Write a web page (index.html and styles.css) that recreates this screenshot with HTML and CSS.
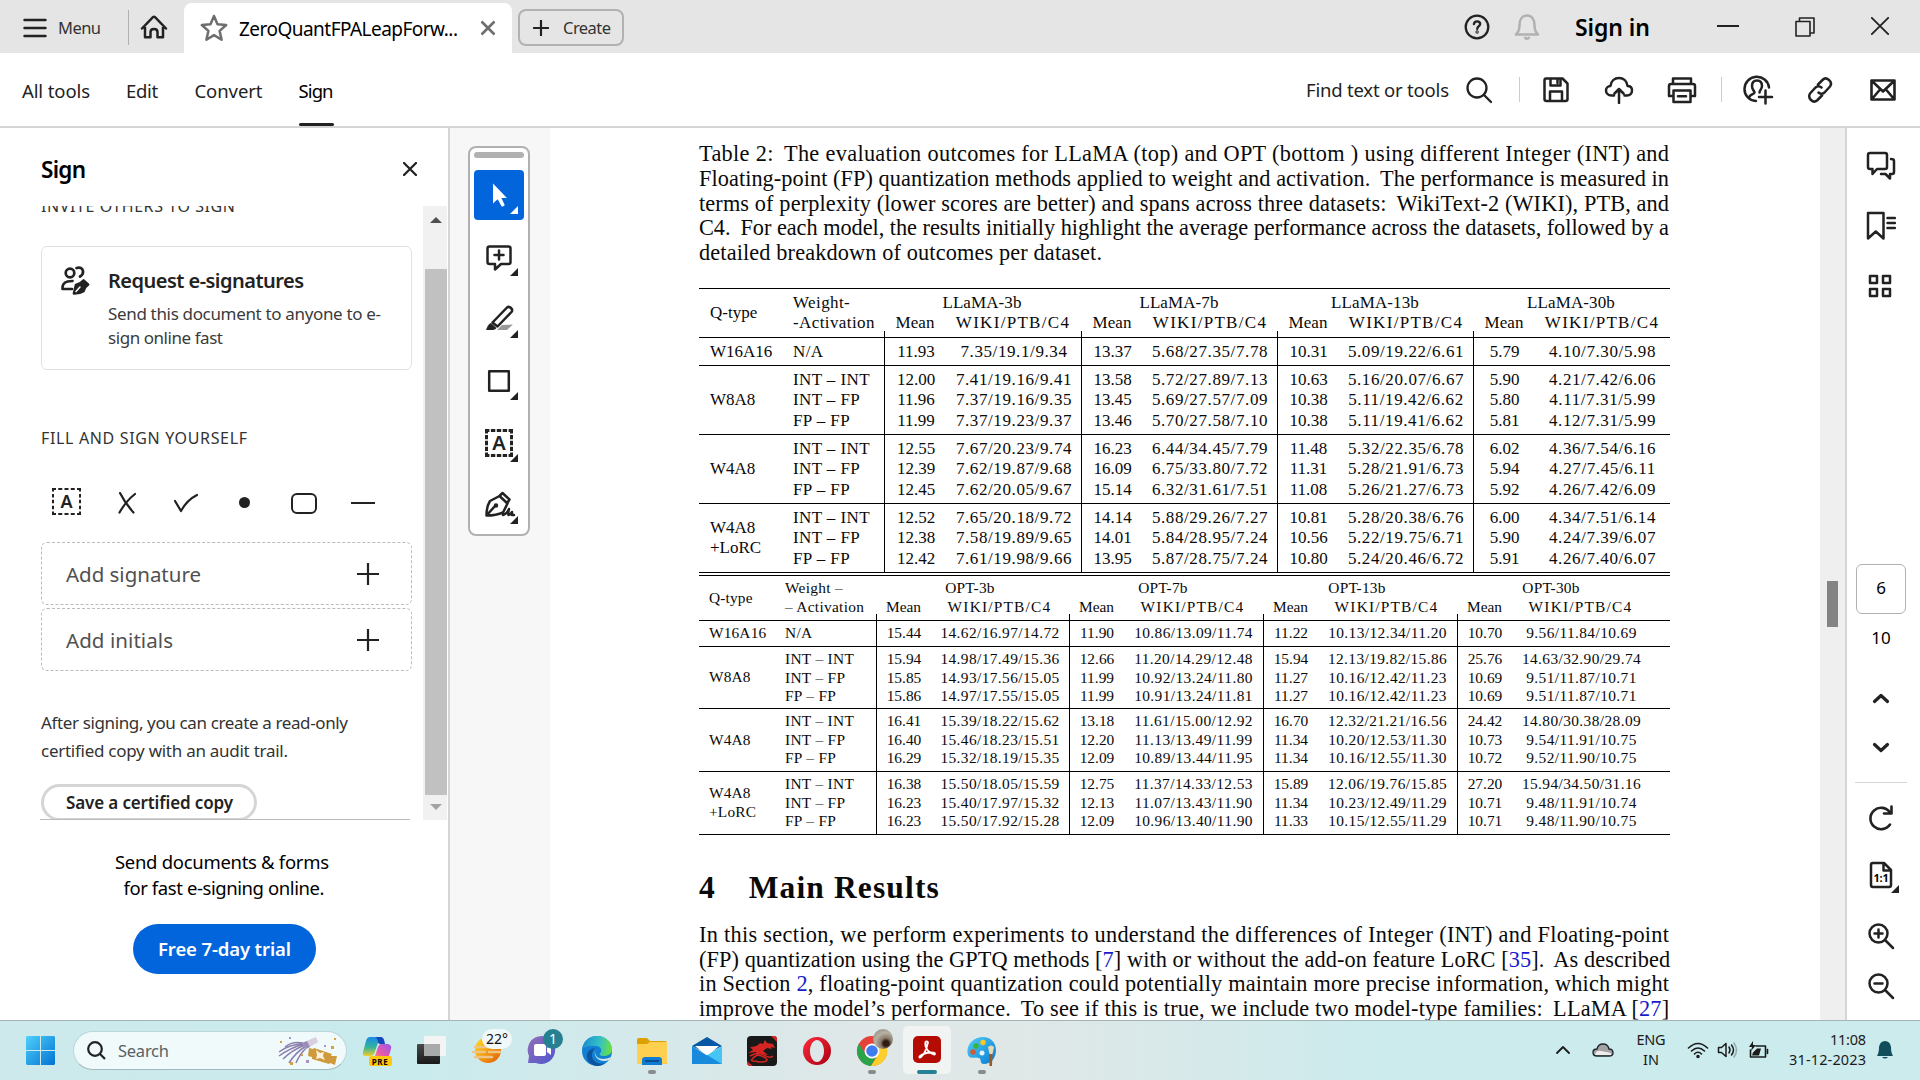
FILE: index.html
```html
<!DOCTYPE html>
<html lang="en">
<head>
<meta charset="utf-8">
<title>ZeroQuantFPALeapForward.pdf</title>
<link rel="stylesheet" href="styles.css">
</head>
<body>
<div class="window">
  <header class="titlebar">
    <div class="menu">
      <svg class="ic" width="24" height="20" viewBox="0 0 24 20" stroke-width="2.4"><path d="M1.5 2h21M1.5 10h21M1.5 18h21"/></svg>
      <span data-w="43">Menu</span>
    </div>
    <div class="home">
      <svg class="ic" width="28" height="26" viewBox="0 0 28 26" stroke-width="2.5"><path d="M2 14.500 13 3.200q1-1 2 0L26 14.500M5 13v10.200h5.500V18q0-3 3.500-3t3.500 3v5.200H23V13"/></svg>
    </div>
    <div class="tab">
      <svg class="star" width="30" height="30" viewBox="0 0 30 30"><path d="m15 3 3.500 8.200 8.700.8-6.600 5.900 2 8.800L15 22.100 7.400 26.700l2-8.800L2.800 12l8.700-.8z"/></svg>
      <span class="tab-title" data-w="219">ZeroQuantFPALeapForw...</span>
      <svg class="tab-close" width="16" height="16" viewBox="0 0 16 16"><path d="m1.500 1.500 13 13m0-13-13 13"/></svg>
    </div>
    <div class="create">
      <svg class="ic" width="16" height="16" viewBox="0 0 16 16" stroke-width="2.2"><path d="M8 .8v14.400M.8 8h14.400"/></svg>
      <span data-w="48">Create</span>
    </div>
    <div class="title-right">
      <svg class="ic" width="26" height="26" viewBox="0 0 26 26" stroke-width="2.300"><circle cx="13" cy="13" r="11.300"/><path d="M9.900 10.200q.3-2.900 3.200-2.900t3.100 2.600c0 2-3 2.500-3 5"/><circle cx="13.100" cy="18" r=".5"/></svg>
      <svg class="bell" width="26" height="28" viewBox="0 0 26 28"><path d="M2 21.500h22c-2.500-2.500-3.500-4-3.500-9C20.500 6 17.500 2.500 13 2.500S5.500 6 5.500 12.500c0 5-1 6.500-3.500 9zM10.500 24q2.500 3.500 5 0"/></svg>
      <span class="signin" data-w="75">Sign in</span>
      <svg class="ic min" width="22" height="20" viewBox="0 0 22 20" stroke-width="1.800"><path d="M0 9h22"/></svg>
      <svg class="ic restore" width="20" height="20" viewBox="0 0 20 20" stroke-width="1.600"><path d="M1 4.500h14V19H1zM4.500 4V1H19v15h-4"/></svg>
      <svg class="ic close" width="18" height="18" viewBox="0 0 18 18" stroke-width="1.800"><path d="m.8.800 16.400 16.400m0-16.400L.8 17.200"/></svg>
    </div>
  </header>

  <nav class="toolbar">
    <span class="t1" data-w="68">All tools</span>
    <span class="t2" data-w="32">Edit</span>
    <span class="t3" data-w="68">Convert</span>
    <span class="t4 active" data-w="35">Sign</span>
    <div class="tool-right">
      <span data-w="143">Find text or tools</span>
      <svg class="ic find" width="28" height="28" viewBox="0 0 28 28" stroke-width="2.300"><circle cx="12" cy="12" r="9.500"/><path d="m19 19 7 7"/></svg>
      <i class="sep"></i>
      <svg class="ic i1" width="28" height="28" viewBox="0 0 28 28" stroke-width="2.500"><path d="M4 2.500h16.500l5 5V23q0 2-2 2h-19q-2 0-2-2V4.500q0-2 1.500-2zM8.500 3v6.500h10V3M8 25v-9.500h12V25M15.500 4v3"/></svg>
      <svg class="ic i2" width="30" height="28" viewBox="0 0 30 28" stroke-width="2.500"><path d="M10 19.500H7.500C4 19.500 2 17 2 14.500s2-4.500 4.500-4.500C7 5 10.500 2 15 2s8 3 8.500 8c3 0 4.500 2 4.500 4.500 0 3-2 5-5 5h-2.500M15 27V13M10.500 17.500 15 13l4.500 4.500"/></svg>
      <svg class="ic i3" width="30" height="28" viewBox="0 0 30 28" stroke-width="2.500"><path d="M6 20H2V10q0-2 2-2h22q2 0 2 2v10h-4M6 8V2.500h18V8M6.500 14.500h17V26h-17zM11 20.300h8"/></svg>
      <i class="sep"></i>
      <svg class="ic i4" width="32" height="32" viewBox="0 0 32 32" stroke-width="2.500"><path d="M14 27C7 26.500 2.500 21.500 2.500 15A12.300 12.300 0 0 1 27 13.500M7 24c.5-4 5.500-3.500 5.500-5.500 0-1.500-2.500-2.500-2.500-6.500 0-3.500 2-5.500 5-5.500s5 2 5 5.500c0 3-2.500 4.500-2.500 6.500M23.500 16.500v13M17 23h13"/></svg>
      <svg class="ic i5" width="28" height="28" viewBox="0 0 28 28" stroke-width="2.500"><path d="m12 8.500 5-5q2.500-2.500 6 .5t1 6.500l-5.500 6q-3 2.500-6 0M16 19.500l-5 5q-3 2.500-6-.5t-1-6.500l5.500-6q3-2.500 6 0"/></svg>
      <svg class="ic i6" width="28" height="24" viewBox="0 0 28 24" stroke-width="2.600"><path d="M2.500 2.500h23v19h-23zM3 3l11 10.500L25 3M3 21l8-9.500M25 21l-8-9.500"/></svg>
    </div>
  </nav>

  <main class="body">
    <aside class="panel">
      <div class="panel-head">
        <span data-w="45">Sign</span>
        <svg class="ic" width="14" height="14" viewBox="0 0 14 14" stroke-width="2.300"><path d="m1 1 12 12M13 1 1 13"/></svg>
      </div>
      <div class="scroller">
        <div class="scroll-content">
          <h3 class="invite"><span data-w="194">INVITE OTHERS TO SIGN</span></h3>
          <section class="card">
            <svg class="ic" width="30" height="30" viewBox="0 0 30 30" stroke-width="2.700"><circle cx="10" cy="8" r="4.300"/><path d="M16.500 3q5.500-1.500 6.500 3 .5 3.500-3 5.500M12 24H2.500q-.5-6 5-7.500l5-.5"/><path fill="#222" d="M14 28.500l2-8.500q5-1.500 7.500-4.500l4.500 4q-4 2.500-4.500 6.500-4 2.500-9.500 2.500z"/><path d="m16 26.500 4-4.500" stroke="#fff" stroke-width="1.500"/></svg>
            <div>
              <h2><span data-w="196">Request e-signatures</span></h2>
              <p><span data-w="273">Send this document to anyone to e-</span><br><span data-w="115">sign online fast</span></p>
            </div>
          </section>
          <h3 class="fill"><span data-w="206">FILL AND SIGN YOURSELF</span></h3>
          <div class="marks">
            <span class="textbox-mark small"><svg class="frame" width="29" height="27" viewBox="0 0 29 27"><path stroke-dasharray="4 2.250" d="M0 1h29M0 26h29"/><path stroke-dasharray="3.500 2.375" d="M1 0v27M28 0v27"/></svg><b>A</b></span>
            <svg class="ic cross" width="18" height="22" viewBox="0 0 18 22" stroke-width="2.200"><path d="M2 1q5 10 13.500 19.500M17 2Q8 9 1.500 20.500"/></svg>
            <svg class="ic check" width="24" height="20" viewBox="0 0 24 20" stroke-width="2.200"><path d="m1 8 6 10Q13 7 23 2"/></svg>
            <i class="dot"></i>
            <i class="rounded"></i>
            <i class="dash"></i>
          </div>
          <div class="adder"><span data-w="135">Add signature</span><svg class="ic" width="22" height="22" viewBox="0 0 22 22" stroke-width="2.200"><path d="M11 0v22M0 11h22"/></svg></div>
          <div class="adder"><span data-w="107">Add initials</span><svg class="ic" width="22" height="22" viewBox="0 0 22 22" stroke-width="2.200"><path d="M11 0v22M0 11h22"/></svg></div>
          <p class="after"><span data-w="307">After signing, you can create a read-only</span><br><span data-w="247">certified copy with an audit trail.</span></p>
          <div class="save"><span data-w="167">Save a certified copy</span></div>
        </div>
        <div class="scrollbar"><i class="up"></i><i class="thumb"></i><i class="down"></i></div>
      </div>
      <div class="promo">
        <p><span class="lead" data-w="214">Send documents &amp; forms</span><br><span data-w="201">for fast e-signing online.</span></p>
        <div class="trial"><span data-w="133">Free 7-day trial</span></div>
      </div>
    </aside>

    <div class="gutter">
      <div class="palette">
        <i class="grip"></i>
        <div class="tool selected"><svg width="50" height="50" viewBox="0 0 50 50"><path fill="#fff" d="M19 13.500v20l4.700-4.200 3.800 7q2.500.7 3.200-1.300l-3.300-7h5.500z"/></svg></div>
        <div class="tool"><svg class="ic" width="50" height="50" viewBox="0 0 50 50" stroke-width="2.500"><path d="M15.500 14.500h19q2 0 2 2V30q0 2-2 2H27l-6 5.500V32h-5.500q-2 0-2-2V16.500q0-2 2-2zM25 18.500v9M20.500 23h9"/></svg></div>
        <div class="tool"><svg class="ic" width="50" height="50" viewBox="0 0 50 50" stroke-width="2.500"><path d="m18.500 28.500 14.500-15q2-1.500 4 .5t.5 4L23.500 32.500z"/><path fill="#222" stroke="none" d="m17 29 5.500 5q-1 2-4 2H12q2-6 5-7z"/><path fill="#999" stroke="none" d="m28 31 11-.5-6 5.500H23z"/></svg></div>
        <div class="tool"><svg class="ic" width="50" height="50" viewBox="0 0 50 50" stroke-width="2.500"><path d="M15.200 15.200h19.600v19.600H15.200z"/></svg></div>
        <div class="tool"><span class="textbox-mark"><svg class="frame bold" width="28" height="28" viewBox="0 0 28 28"><path stroke-dasharray="4.400 1.500" d="M0 1.500h28M0 26.500h28"/><path stroke-dasharray="4.400 1.500" d="M1.500 0v28M26.500 0v28"/></svg><b>A</b></span></div>
        <div class="tool"><svg class="ic" width="50" height="50" viewBox="0 0 50 50" stroke-width="2.500"><path d="M12.500 35.500q0-9 3.500-14.500l9.500-5 8 7.500-4.500 9q-6.500 3-16.500 3l8.500-9.500M25.500 16l3-3 7 6.500-2.500 4M29 35q4-1 6-6-1 4-.5 6 2.500-.5 3.500-3v3h2"/><circle cx="22" cy="25.500" r="1"/></svg></div>
      </div>
    </div>

    <article class="page">
      <div class="text caption">
        <span data-w="970">Table 2:&thinsp; The evaluation outcomes for LLaMA (top) and OPT (bottom ) using different Integer (INT) and</span>
        <span data-w="970">Floating-point (FP) quantization methods applied to weight and activation.&thinsp; The performance is measured in</span>
        <span data-w="970">terms of perplexity (lower scores are better) and spans across three datasets:&thinsp; WikiText-2 (WIKI), PTB, and</span>
        <span data-w="970">C4.&thinsp; For each model, the results initially highlight the average performance across the datasets, followed by a</span>
        <span data-w="403">detailed breakdown of outcomes per dataset.</span>
      </div>

      <div class="results llama">
        <div class="row head"><div class="q">Q-type</div><div class="wa">Weight-<br>-Activation</div>
          <div class="model"><span>LLaMA-3b</span><i>Mean</i><b>WIKI/PTB/C4</b></div><div class="model"><span>LLaMA-7b</span><i>Mean</i><b>WIKI/PTB/C4</b></div><div class="model"><span>LLaMA-13b</span><i>Mean</i><b>WIKI/PTB/C4</b></div><div class="model"><span>LLaMA-30b</span><i>Mean</i><b>WIKI/PTB/C4</b></div></div>
        <div class="row one"><div class="q">W16A16</div><div class="wa">N/A</div>
          <div class="mean">11.93</div><div class="ppl">7.35/19.1/9.34</div><div class="mean">13.37</div><div class="ppl">5.68/27.35/7.78</div><div class="mean">10.31</div><div class="ppl">5.09/19.22/6.61</div><div class="mean">5.79</div><div class="ppl">4.10/7.30/5.98</div></div>
        <div class="row"><div class="q">W8A8</div><div class="wa">INT – INT<br>INT – FP<br>FP – FP</div>
          <div class="mean">12.00<br>11.96<br>11.99</div><div class="ppl">7.41/19.16/9.41<br>7.37/19.16/9.35<br>7.37/19.23/9.37</div>
          <div class="mean">13.58<br>13.45<br>13.46</div><div class="ppl">5.72/27.89/7.13<br>5.69/27.57/7.09<br>5.70/27.58/7.10</div>
          <div class="mean">10.63<br>10.38<br>10.38</div><div class="ppl">5.16/20.07/6.67<br>5.11/19.42/6.62<br>5.11/19.41/6.62</div>
          <div class="mean">5.90<br>5.80<br>5.81</div><div class="ppl">4.21/7.42/6.06<br>4.11/7.31/5.99<br>4.12/7.31/5.99</div></div>
        <div class="row"><div class="q">W4A8</div><div class="wa">INT – INT<br>INT – FP<br>FP – FP</div>
          <div class="mean">12.55<br>12.39<br>12.45</div><div class="ppl">7.67/20.23/9.74<br>7.62/19.87/9.68<br>7.62/20.05/9.67</div>
          <div class="mean">16.23<br>16.09<br>15.14</div><div class="ppl">6.44/34.45/7.79<br>6.75/33.80/7.72<br>6.32/31.61/7.51</div>
          <div class="mean">11.48<br>11.31<br>11.08</div><div class="ppl">5.32/22.35/6.78<br>5.28/21.91/6.73<br>5.26/21.27/6.73</div>
          <div class="mean">6.02<br>5.94<br>5.92</div><div class="ppl">4.36/7.54/6.16<br>4.27/7.45/6.11<br>4.26/7.42/6.09</div></div>
        <div class="row"><div class="q">W4A8<br>+LoRC</div><div class="wa">INT – INT<br>INT – FP<br>FP – FP</div>
          <div class="mean">12.52<br>12.38<br>12.42</div><div class="ppl">7.65/20.18/9.72<br>7.58/19.89/9.65<br>7.61/19.98/9.66</div>
          <div class="mean">14.14<br>14.01<br>13.95</div><div class="ppl">5.88/29.26/7.27<br>5.84/28.95/7.24<br>5.87/28.75/7.24</div>
          <div class="mean">10.81<br>10.56<br>10.80</div><div class="ppl">5.28/20.38/6.76<br>5.22/19.75/6.71<br>5.24/20.46/6.72</div>
          <div class="mean">6.00<br>5.90<br>5.91</div><div class="ppl">4.34/7.51/6.14<br>4.24/7.39/6.07<br>4.26/7.40/6.07</div></div>
      </div>

      <div class="results opt">
        <div class="row head"><div class="q">Q-type</div><div class="wa">Weight –<br>– Activation</div>
          <div class="model"><span>OPT-3b</span><i>Mean</i><b>WIKI/PTB/C4</b></div><div class="model"><span>OPT-7b</span><i>Mean</i><b>WIKI/PTB/C4</b></div><div class="model"><span>OPT-13b</span><i>Mean</i><b>WIKI/PTB/C4</b></div><div class="model"><span>OPT-30b</span><i>Mean</i><b>WIKI/PTB/C4</b></div></div>
        <div class="row one"><div class="q">W16A16</div><div class="wa">N/A</div>
          <div class="mean">15.44</div><div class="ppl">14.62/16.97/14.72</div><div class="mean">11.90</div><div class="ppl">10.86/13.09/11.74</div><div class="mean">11.22</div><div class="ppl">10.13/12.34/11.20</div><div class="mean">10.70</div><div class="ppl">9.56/11.84/10.69</div></div>
        <div class="row first"><div class="q">W8A8</div><div class="wa">INT – INT<br>INT – FP<br>FP – FP</div>
          <div class="mean">15.94<br>15.85<br>15.86</div><div class="ppl">14.98/17.49/15.36<br>14.93/17.56/15.05<br>14.97/17.55/15.05</div>
          <div class="mean">12.66<br>11.99<br>11.99</div><div class="ppl">11.20/14.29/12.48<br>10.92/13.24/11.80<br>10.91/13.24/11.81</div>
          <div class="mean">15.94<br>11.27<br>11.27</div><div class="ppl">12.13/19.82/15.86<br>10.16/12.42/11.23<br>10.16/12.42/11.23</div>
          <div class="mean">25.76<br>10.69<br>10.69</div><div class="ppl">14.63/32.90/29.74<br>9.51/11.87/10.71<br>9.51/11.87/10.71</div></div>
        <div class="row"><div class="q">W4A8</div><div class="wa">INT – INT<br>INT – FP<br>FP – FP</div>
          <div class="mean">16.41<br>16.40<br>16.29</div><div class="ppl">15.39/18.22/15.62<br>15.46/18.23/15.51<br>15.32/18.19/15.35</div>
          <div class="mean">13.18<br>12.20<br>12.09</div><div class="ppl">11.61/15.00/12.92<br>11.13/13.49/11.99<br>10.89/13.44/11.95</div>
          <div class="mean">16.70<br>11.34<br>11.34</div><div class="ppl">12.32/21.21/16.56<br>10.20/12.53/11.30<br>10.16/12.55/11.30</div>
          <div class="mean">24.42<br>10.73<br>10.72</div><div class="ppl">14.80/30.38/28.09<br>9.54/11.91/10.75<br>9.52/11.90/10.75</div></div>
        <div class="row"><div class="q">W4A8<br>+LoRC</div><div class="wa">INT – INT<br>INT – FP<br>FP – FP</div>
          <div class="mean">16.38<br>16.23<br>16.23</div><div class="ppl">15.50/18.05/15.59<br>15.40/17.97/15.32<br>15.50/17.92/15.28</div>
          <div class="mean">12.75<br>12.13<br>12.09</div><div class="ppl">11.37/14.33/12.53<br>11.07/13.43/11.90<br>10.96/13.40/11.90</div>
          <div class="mean">15.89<br>11.34<br>11.33</div><div class="ppl">12.06/19.76/15.85<br>10.23/12.49/11.29<br>10.15/12.55/11.29</div>
          <div class="mean">27.20<br>10.71<br>10.71</div><div class="ppl">15.94/34.50/31.16<br>9.48/11.91/10.74<br>9.48/11.90/10.75</div></div>
      </div>

      <h1 class="section"><span>4</span><span data-w="190">Main Results</span></h1>
      <div class="text">
        <span data-w="970">In this section, we perform experiments to understand the differences of Integer (INT) and Floating-point</span>
        <span data-w="971">(FP) quantization using the GPTQ methods [<a>7</a>] with or without the add-on feature LoRC [<a>35</a>].&thinsp; As described</span>
        <span data-w="970">in Section <a>2</a>, floating-point quantization could potentially maintain more precise information, which might</span>
        <span data-w="970">improve the model’s performance.&thinsp; To see if this is true, we include two model-type families:&thinsp; LLaMA [<a>27</a>]</span>
      </div>
    </article>

    <div class="doc-scroll"><i></i></div>

    <aside class="rail">
      <svg class="ic r1" width="30" height="30" viewBox="0 0 30 30" stroke-width="2.500"><path d="M4 3h15q2 0 2 2v12q0 2-2 2h-8l-4.500 5v-5H4q-2 0-2-2V5q0-2 2-2zM25 9q3 0 3 2v11q0 2-2 2h-2v4.500L19.500 24H15"/></svg>
      <svg class="ic r2" width="30" height="30" viewBox="0 0 30 30" stroke-width="2.500"><path d="M2 2h15.500v25.500l-7.700-7-7.800 7zM21.500 7H29M21.500 12H29M21.500 17H29"/></svg>
      <svg class="ic r3" width="24" height="24" viewBox="0 0 24 24" stroke-width="2.500"><path d="M2 2h7v7H2zM15 2h7v7h-7zM2 15h7v7H2zM15 15h7v7h-7z"/></svg>
      <div class="pagebox">6</div>
      <div class="pagecount">10</div>
      <svg class="ic r4" width="18" height="12" viewBox="0 0 18 12" stroke-width="3.200"><path d="m2.500 9.500 6.500-6 6.500 6"/></svg>
      <svg class="ic r5" width="18" height="12" viewBox="0 0 18 12" stroke-width="3.200"><path d="m2.500 2.500 6.500 6 6.500-6"/></svg>
      <i class="rule"></i>
      <svg class="ic r6" width="28" height="28" viewBox="0 0 28 28" stroke-width="2.600"><path d="M23 20.500A10.700 10.700 0 1 1 23 8.500M24.500 2.500V9.500H17"/></svg>
      <div class="fit"><svg class="ic" width="24" height="28" viewBox="0 0 24 28" stroke-width="2.500"><path d="M4 2h11l7 7v15q0 2-2 2H4q-2 0-2-2V4q0-2 2-2zM14.500 2v7.500H22"/></svg><span>1:1</span></div>
      <svg class="ic r7" width="28" height="28" viewBox="0 0 28 28" stroke-width="2.500"><circle cx="11.500" cy="11.500" r="9"/><path d="m18 18 8 8M11.500 7.500v8M7.500 11.500h8"/></svg>
      <svg class="ic r8" width="28" height="28" viewBox="0 0 28 28" stroke-width="2.500"><circle cx="11.500" cy="11.500" r="9"/><path d="m18 18 8 8M7.500 11.500h8"/></svg>
    </aside>
  </main>

  <footer class="taskbar">
    <svg class="start" width="29" height="29" viewBox="0 0 29 29"><defs><linearGradient id="win" x1="0" y1="0" x2="1" y2="1"><stop offset="0" stop-color="#4fd0fb"/><stop offset="1" stop-color="#0173d2"/></linearGradient></defs><path fill="url(#win)" d="M1 0h13v14H0V1zM15 0h13l1 1v13H15zM0 15h14v14H1l-1-1zM15 15h14v13l-1 1H15z"/></svg>
    <div class="search">
      <svg width="19" height="19" viewBox="0 0 19 19"><circle cx="8" cy="8" r="6.800"/><path d="m12.800 12.800 5.200 5.200"/></svg>
      <span data-w="51">Search</span>
      <svg class="party" width="62" height="32" viewBox="0 0 62 32"><g fill="none" stroke="#8c80ad" stroke-width="1.500"><path d="M25 9Q12 9 1 17M26 9Q12 13 1 21M27 10Q14 15 5 24M28 11Q17 18 11 28M29 12q-8 8-11 16M25 8Q14 6 7 12"/></g><path d="m24 8 14-6 2 5-12 7z" fill="#d8cee0"/><path d="m24 8 5-2 3 6-4 2z" fill="#9a8cb8"/><path d="m31 13 4 1 1-1 18 6-1 2 6 0-2 9-5-2-1 1-17-5v-2l-4-1z" fill="#cf9a3c"/><path d="m38 15 4 3 4-1-1 4 2 4-5-2-4 1 1-4z" fill="#fff0dc"/><path fill="#d7a13f" d="M2 6h2v2H2zM53 11h3v3h-3zM23 19h2v2h-2zM12 27h3v3h-3zM56 3h2v2h-2z"/><path fill="#a88fc4" d="M11 2h2v2h-2zM46 10h2v2h-2zM28 25h3v3h-3z"/></svg>
    </div>
    <div class="apps">
      <div class="app"><svg width="32" height="32" viewBox="0 0 32 32"><defs><linearGradient id="cpa" x1="0" y1="0" x2="0" y2="1"><stop offset="0" stop-color="#188be8"/><stop offset=".55" stop-color="#35b59a"/><stop offset="1" stop-color="#f2cd25"/></linearGradient><linearGradient id="cpb" x1="1" y1="0" x2="0" y2="1"><stop offset="0" stop-color="#9c55ef"/><stop offset=".6" stop-color="#e55aa8"/><stop offset="1" stop-color="#ff9660"/></linearGradient></defs><path fill="url(#cpa)" d="M9 2h10q3 0 4 4l-6 2-4 11q-1 2-4 2H5q-4 0-3-4L5 6q1-4 4-4z"/><path fill="#1546c0" d="M15 2h5q3 0 4 7h-5q-2 0-2-3z"/><path fill="url(#cpb)" d="M20 9h7q4 1 3 5l-3 10H13l4-12q1-3 3-3z"/><rect x="8" y="21" width="23" height="10" rx="2" fill="#ffc90e"/></svg><span class="pre">PRE</span></div>
      <div class="app"><svg width="32" height="32" viewBox="0 0 32 32"><defs><linearGradient id="tv" x1="0" y1="0" x2="0" y2="1"><stop offset="0" stop-color="#4a4a4a"/><stop offset="1" stop-color="#191919"/></linearGradient></defs><rect x="1" y="9" width="23" height="20" rx="1" fill="url(#tv)"/><rect x="8" y="1" width="22" height="20" rx="1" fill="#f4f4f4"/><path fill="#a9aaab" d="M8 9h16v12H8z"/></svg></div>
      <div class="app"><svg width="32" height="32" viewBox="0 0 32 32"><defs><linearGradient id="sun" x1="0" y1="0" x2="1" y2="1"><stop offset=".2" stop-color="#ffc715"/><stop offset="1" stop-color="#e15a08"/></linearGradient></defs><circle cx="17" cy="15" r="13" fill="url(#sun)"/><path d="M4 12h12M2 17h12M18 17h11M4 22h17M14 12h8" stroke="#ecc58a" stroke-width="2.500" stroke-linecap="round"/></svg><span class="temp">22°</span></div>
      <div class="app"><svg width="32" height="32" viewBox="0 0 32 32"><defs><linearGradient id="chat" x1="0" y1="0" x2="1" y2="1"><stop offset="0" stop-color="#9370b8"/><stop offset="1" stop-color="#4f55ce"/></linearGradient></defs><path fill="url(#chat)" d="M16 1a14 14 0 1 1-6 27H2l1-7A14 14 0 0 1 16 1z"/><rect x="8" y="9" width="12" height="12" rx="2" fill="#fff"/><path fill="#fff" d="m21 13 4-3v10l-4-3z"/></svg><span class="count">1</span></div>
      <div class="app"><svg width="32" height="32" viewBox="0 0 32 32"><defs><linearGradient id="edge" x1="0" y1=".3" x2="1" y2=".4"><stop offset="0" stop-color="#198bd5"/><stop offset=".6" stop-color="#36c2c3"/><stop offset="1" stop-color="#6be13e"/></linearGradient></defs><circle cx="16" cy="16" r="15" fill="#127fd2"/><path fill="url(#edge)" d="M1 15C2 6 8 1 16 1c9 0 15 6 15 13 0 5-4 7-8 7-5 0-5-2-3-4 1-4-2-6-5-6C9 11 3 11 1 15z"/><path fill="#0c549e" d="M14 13c-7 8-1 18 10 15-4 4-11 4-15 0-6-6-3-14 5-15z"/><path fill="#d6e8eb" d="M14 15c-1 9 8 11 16 7l-2 3c-7 3-16-1-14-10z"/></svg></div>
      <div class="app run"><svg width="32" height="32" viewBox="0 0 32 32"><path fill="#dca000" d="M1 5q0-2 2-2h8l3 3h15q2 0 2 2v5H1z"/><path fill="#ffd050" d="M1 9h10l3-2h17v22H1z"/><path fill="#0f7bd2" d="M6 30v-5q0-3 3-3h14q3 0 3 3v5z"/><path fill="#074d91" d="M9 25h14v2H9z"/></svg></div>
      <div class="app"><svg width="32" height="32" viewBox="0 0 32 32"><path fill="#0758a5" d="M1 11 16 2l15 9-15 8z"/><path fill="#fff" d="M4 11h24L16 21z"/><path fill="#1989dd" d="M1 11v18h15l4-6z"/><path fill="#46c5f5" d="M31 11 15 21l16 8z"/><path fill="#188bdc" d="m1 29 14-9 1 0 15 9z"/></svg></div>
      <div class="app"><svg width="32" height="32" viewBox="0 0 32 32"><rect x="1" y="1" width="30" height="30" rx="4" fill="#191919"/><path fill="#d42522" d="m25 1 6 6V4q0-3-3-3zM1 26v3l2 2h4zM4 12q7 0 10-4l3 1 2-4 2 3 6 1 2 4-4-1 1 2-5-1-4 3 5 4-7-1-4 1-1-3-8 1 5-3z"/><path fill="none" stroke="#d42522" stroke-width="1.500" d="M4 21q8-5 14-1t9 1M5 26q5-9 13-4t-5 5q-3-1-7-1"/></svg></div>
      <div class="app"><svg width="32" height="32" viewBox="0 0 32 32"><defs><linearGradient id="op" x1="0" y1="0" x2="1" y2="1"><stop offset="0" stop-color="#ff2a3d"/><stop offset="1" stop-color="#a80112"/></linearGradient></defs><path fill="url(#op)" fill-rule="evenodd" d="M16 2a14 14 0 1 0 0 28 14 14 0 0 0 0-28zm0 3c4 0 7 5 7 11s-3 11-7 11-7-5-7-11 3-11 7-11z"/></svg></div>
      <div class="app run"><svg width="32" height="32" viewBox="0 0 32 32"><circle cx="16" cy="16" r="15" fill="#e7423a"/><path fill="#2ba34b" d="M3 8.500 13 25l3 6A15 15 0 0 1 3 8.500z"/><path fill="#2ba34b" d="m10 20 6 3 4-1-5 9-7-3z"/><path fill="#fdcf2c" d="M16 9h13.500A15 15 0 0 1 15 31l8-13z"/><circle cx="16" cy="16" r="7.500" fill="#fff"/><circle cx="16" cy="16" r="5.800" fill="#3d7df0"/></svg><i class="avatar"></i></div>
      <div class="app current"><svg width="32" height="32" viewBox="0 0 32 32"><rect x="2" y="1" width="28" height="27" rx="5" fill="#b40c02"/><path fill="none" stroke="#fff" stroke-width="1.800" d="M14.500 7q-1 4 2 8t7 4.500q2-2-4-2t-11 4q-.5 2 2 0t4-6 2.500-8q-1-2-2.500-.5z"/></svg></div>
      <div class="app run"><svg width="32" height="32" viewBox="0 0 32 32"><defs><linearGradient id="pal" x1="0" y1="0" x2="1" y2="1"><stop offset="0" stop-color="#52cff6"/><stop offset="1" stop-color="#0779d3"/></linearGradient></defs><path fill="url(#pal)" d="M17 2c8 0 13 6 13 13 0 9-6 14-12 14-5 0-2-5-5-6-4-2-9 2-11-3C-1 10 8 2 17 2z"/><circle cx="10" cy="11" r="2.700" fill="#38b437"/><circle cx="17" cy="7.500" r="2.700" fill="#ffc726"/><circle cx="7" cy="17" r="2.700" fill="#d45835"/><circle cx="16" cy="18" r="2.500" fill="#e5f3f8"/><path fill="#9d5b21" d="M23 18h3.500l-.5 13h-2.500z"/><path fill="#e8d9b5" d="M22 12q3-3 6 0l-1.500 7h-3z"/></svg></div>
    </div>
    <div class="tray">
      <svg class="ti caret" width="14" height="10" viewBox="0 0 14 10" stroke-width="1.800"><path d="m1 8 6-6 6 6"/></svg>
      <svg class="cloud" width="22" height="16" viewBox="0 0 22 16"><path d="M5 14q-4 0-4-3.500T5 7q1-5 6-5t6 5q4 0 4 4 0 3-4 3z" fill="#a3a3a3" stroke="#20272a" stroke-width="1.400"/><path d="M3 13Q4 8 9 9l8 1.500q3 1 2 2.500z" fill="#ededed"/></svg>
      <div class="lang"><span data-w="29">ENG</span><span>IN</span></div>
      <svg class="ti wifi" width="22" height="18" viewBox="0 0 22 18" stroke-width="1.600"><path d="M1.500 7q9.500-9 19 0M4.500 10q6.500-6 13 0M7.500 13q3.500-3.500 7 0"/><circle cx="11" cy="15.500" r="1"/></svg>
      <svg class="ti vol" width="22" height="18" viewBox="0 0 22 18" stroke-width="1.500"><path d="M1.500 6.500h3L9 2.500v13l-4.500-4h-3zM12 6q2 3 0 6M14.500 4q4 5 0 10"/><path d="M17 2q5 7 0 14" opacity=".3"/></svg>
      <svg class="ti bat" width="22" height="18" viewBox="0 0 22 18" stroke-width="1.600"><path d="M8 5h9.500v11H2.500V9M19.500 8.500v4"/><path fill="#1b1b1b" stroke="none" d="M4 14.500h7l2-7H9l-4 4zM5 0 1 6h3L3 10l5-6H5z"/></svg>
      <div class="clock"><span data-w="36">11:08</span><span data-w="77">31-12-2023</span></div>
      <svg class="notif" width="18" height="20" viewBox="0 0 18 20"><path fill="#124d5c" d="M1 16q2-3 2-9 1-6 6-6t6 6q0 6 2 9zM6 17h6q-3 3-6 0z"/></svg>
    </div>
  </footer>
</div>
<script src="fit.js"></script>
</body>
</html>
```
FILE: styles.css
```css
* { box-sizing: border-box; }
body { margin: 0; font-family: "Noto Sans", sans-serif; color: #222; background: #fff; overflow: hidden; }
.window { width: 1920px; height: 1080px; display: flex; flex-direction: column; overflow: hidden; }
svg { display: block; flex: none; }
i, b { font-style: normal; font-weight: normal; }
p, h1, h2, h3 { margin: 0; }
.ic { fill: none; stroke: #222; stroke-linejoin: round; stroke-linecap: round; }
[data-w] { white-space: nowrap; }

/* Title bar */
.titlebar { height: 53px; background: #e5e5e5; display: flex; flex: none; }
.menu { width: 129px; height: 35px; margin-top: 10px; padding-left: 23px; display: flex; align-items: center; gap: 11px; font-size: 16.500px; color: #333; border-right: 1px solid #b1b1b1; }
.home { width: 55px; padding: 14px 0 0 11px; }
.tab { width: 328px; margin-top: 3px; background: #fff; border-radius: 8px 8px 0 0; display: flex; align-items: center; padding: 0 16px 0 15px; font-size: 19px; color: #000; }
.tab-title { width: 219px; margin-left: 10px; padding-top: 1px; }
.tab-close { margin-left: auto; fill: none; stroke: #6e6e6e; stroke-width: 2.600; }
.star { fill: none; stroke: #6e6e6e; stroke-width: 2.500; stroke-linejoin: round; }
.create { width: 106px; height: 37px; margin: 9px 0 0 6px; border: 2px solid #b1b1b1; border-radius: 8px; display: flex; align-items: center; gap: 14px; padding-left: 13px; font-size: 16.500px; color: #333; }
.title-right { margin-left: auto; padding-right: 31px; display: flex; align-items: center; }
.bell { margin-left: 24px; fill: none; stroke: #b1b1b1; stroke-width: 2.500; stroke-linejoin: round; }
.signin { width: 75px; margin-left: 35px; font-size: 23px; font-weight: 600; color: #000; padding-top: 1px; }
.min { margin-left: 67px; }
.restore { margin: 0 56px 0 56px; }
.close { margin-top: -2px; }

/* Toolbar */
.toolbar { height: 75px; flex: none; border-bottom: 2px solid #d5d5d5; display: flex; font-size: 18.500px; line-height: 76px; padding-left: 22px; }
.toolbar > span { position: relative; }
.t1 { width: 68px; } .t2 { width: 32px; margin-left: 36px; } .t3 { width: 68px; margin-left: 36px; } .t4 { width: 35px; margin-left: 36px; color: #000; }
.active::after { content: ""; position: absolute; left: 0; bottom: 0; width: 35px; height: 3px; border-radius: 2px; background: #222; }
.tool-right { margin-left: auto; display: flex; align-items: center; width: 614px; }
.tool-right > span { width: 143px; }
.find { margin-left: 16px; }
.sep { width: 1px; height: 25px; background: #ccc; margin-left: 26px; }
.i1 { margin-left: 22px; } .i2 { margin-left: 34px; } .i3 { margin-left: 33px; }
.i4 { margin-left: 20px; } .i5 { margin-left: 32px; } .i6 { margin: 0 0 0 35px; }
.i3 + .sep { margin-left: 24px; }

/* Body */
.body { height: 892px; flex: none; display: flex; overflow: hidden; }

.panel { width: 450px; border-right: 2px solid #d5d5d5; flex: none; }
.panel-head { height: 78px; display: flex; justify-content: space-between; padding: 26px 31px 0 41px; font-size: 22.500px; line-height: 31px; font-weight: 600; color: #000; }
.panel-head svg { margin-top: 8px; }
.scroller { height: 614px; display: flex; overflow: hidden; }
.scroll-content { width: 423px; padding-left: 41px; position: relative; flex: none; }
.scroll-content::after { content: ""; position: absolute; left: 40px; bottom: 0; width: 370px; height: 1px; background: #bbb; }
h3 { font-size: 16px; font-weight: 400; line-height: 20px; color: #333; }
.invite { margin-top: -10px; height: 50px; }
.card { width: 371px; height: 124px; border: 1px solid #e1e1e1; border-radius: 6px; display: flex; padding: 18px 0 0 18px; gap: 18px; }
.card h2 { font-size: 20px; line-height: 26px; font-weight: 600; margin-top: 3px; }
.card p { font-size: 17px; line-height: 24px; color: #3b3b3b; margin-top: 8px; }
.fill { margin-top: 58px; }
.marks { width: 371px; height: 94px; display: flex; align-items: center; padding: 15px 0 0 11px; }
.cross { margin-left: 37px; }
.check { margin-left: 38px; }
.textbox-mark { width: 28px; height: 28px; font-size: 20px; line-height: 27px; text-align: center; display: grid; }
.textbox-mark > * { grid-area: 1 / 1; font-weight: 600; }
.textbox-mark.small { width: 29px; height: 27px; font-size: 18px; line-height: 26px; margin-top: -2px; }
.frame { stroke: #222; stroke-width: 2; }
.frame.bold { stroke-width: 3; }
.dot { width: 11px; height: 11px; border-radius: 50%; background: #222; margin-left: 41px; }
.rounded { width: 26px; height: 21px; border: 2px solid #222; border-radius: 6px; margin-left: 41px; margin-top: 2px; }
.dash { width: 24px; height: 2px; background: #222; margin-left: 34px; }
.adder { width: 371px; height: 63px; border: 1px dashed #bbb; border-radius: 6px; display: flex; align-items: center; justify-content: space-between; padding: 1px 32px 0 24px; font-size: 20.500px; font-weight: 400; color: #505050; margin-bottom: 3px; }
.after { margin-top: 38px; font-size: 17px; line-height: 27.800px; color: #333; }
.save { width: 216px; height: 37px; margin-top: 19px; border: 3px solid #d5d5d5; border-radius: 19px; padding-left: 22px; font-size: 17px; font-weight: 600; line-height: 31px; }
.scrollbar { width: 24px; background: #f1f1f1; padding: 11px 0 9px 2px; display: flex; flex-direction: column; align-items: center; }
.up { border: 6px solid transparent; border-top: 0; border-bottom: 6px solid #505050; }
.thumb { width: 22px; height: 526px; background: #c1c1c1; margin: 46px 0 9px; }
.down { border: 6px solid transparent; border-bottom: 0; border-top: 6px solid #a3a3a3; }
.promo { width: 448px; display: flex; flex-direction: column; align-items: center; font-size: 18.500px; line-height: 26px; color: #000; text-align: center; padding-top: 29px; }
.lead { padding-right: 4px; }
.trial { width: 183px; height: 50px; border-radius: 25px; background: #0265dc; color: #fff; font-weight: 600; line-height: 49px; margin: 23px 0 0 1px; }

.gutter { width: 100px; background: #f7f7f7; padding: 18px 0 0 18px; flex: none; }
.palette { width: 62px; height: 390px; border: 2px solid #b1b1b1; border-radius: 8px; background: #fff; padding: 4px; display: flex; flex-direction: column; }
.grip { height: 6px; border-radius: 3px; background: #b1b1b1; margin-bottom: 12px; flex: none; }
.tool { width: 50px; height: 50px; margin-bottom: 12px; position: relative; border-radius: 4px; flex: none; display: flow-root; }
.tool .textbox-mark { margin: 11px; }
.tool::after { content: ""; position: absolute; left: 36px; top: 36px; border: 4px solid #222; border-left-color: transparent; border-top-color: transparent; }
.selected { background: #0265dc; }
.selected::after { border-right-color: #fff; border-bottom-color: #fff; }

/* Document */
.page { width: 1270px; padding: 14px 150px 0 149px; flex: none; font-family: "Liberation Serif", serif; color: #0a0a0a; overflow: hidden; }
.text { font-size: 22.300px; line-height: 24.750px; display: flex; flex-direction: column; align-items: flex-start; }
.text a { color: #1a1acc; }
.results { width: 971px; }
.row { display: grid; border-top: 1px solid #000; }
.q, .wa { white-space: nowrap; }
.q { align-self: center; }
.mean, .ppl { text-align: center; }
.mean { border-left: 1px solid #000; }
.model { grid-column: span 2; display: grid; text-align: center; position: relative; align-content: start; }
.model span { grid-column: span 2; }
.model::before { content: ""; position: absolute; left: 0; bottom: 0; width: 1px; height: 6px; background: #000; }

.llama { margin-top: 22px; font-size: 17px; line-height: 20.200px; border-bottom: 1px solid #000; height: 285px; }
.llama .row { grid-template-columns: 93px 92px 63px 134px 62px 134px 62px 134px 62px 135px; height: 69px; }
.llama .row > div { padding-top: 4.500px; }
.llama .head { height: 49px; }
.llama .one { height: 28px; }
.llama .q { padding-left: 11px; }
.llama .row > .q { padding-top: 1px; }
.llama .wa { padding-left: 1px; letter-spacing: .4px; }
.llama .model { grid-template-columns: 62px 134px; letter-spacing: .1px; }
.llama .model b { letter-spacing: 1.300px; }
.llama .ppl { letter-spacing: .6px; }

.opt { margin-top: 2px; font-size: 15.400px; line-height: 18.400px; border-bottom: 1px solid #000; height: 260px; }
.opt .row { grid-template-columns: 86px 91px 55px 138px 55px 139px 55px 139px 55px 139px; height: 63px; }
.opt .row > div { padding-top: 3.500px; }
.opt .head { height: 45px; line-height: 19px; }
.opt .head > div { padding-top: 2.500px; }
.opt .one { height: 26px; }
.opt .first { height: 62px; }
.opt .q { padding-left: 10px; }
.opt .row > .q { padding-top: 0; letter-spacing: .15px; }
.opt .wa { letter-spacing: .3px; }
.opt .model { grid-template-columns: 55px 138px; }
.opt .model span { padding-right: 5px; letter-spacing: .2px; }
.opt .model b { letter-spacing: 1.200px; padding-right: 1px; }
.opt .ppl { letter-spacing: .4px; }

.section { font-size: 31.500px; line-height: 36px; font-weight: 700; margin: 35px 0 16px; display: flex; gap: 34px; }
.section + .text { padding-top: 1px; }

.doc-scroll { width: 25px; background: #efefef; padding: 453px 0 0 7px; flex: none; }
.doc-scroll i { display: block; width: 11px; height: 46px; background: #848484; }

.rail { width: 75px; border-left: 2px solid #d5d5d5; display: flex; flex-direction: column; align-items: center; padding-right: 5px; color: #000; }
.r1 { margin-top: 22px; } .r2 { margin-top: 31px; } .r3 { margin: 33px 3px 0 0; }
.pagebox { width: 50px; height: 50px; margin-top: 266px; border: 1px solid #b1b1b1; border-radius: 6px; text-align: center; font-size: 17px; line-height: 46px; flex: none; }
.pagecount { font-size: 17px; line-height: 24px; margin-top: 12px; }
.r4 { margin-top: 42px; } .r5 { margin-top: 38px; }
.rule { width: 52px; height: 1px; background: #d5d5d5; margin-top: 28px; flex: none; }
.r6 { margin-top: 21px; }
.fit { margin-top: 29px; width: 24px; position: relative; }
.fit span { position: absolute; left: 0; top: 9px; width: 24px; text-align: center; font-size: 11px; font-weight: 700; line-height: 16px; letter-spacing: -.3px; }
.fit::after { content: ""; position: absolute; left: 22px; top: 24px; border: 4px solid #222; border-left-color: transparent; border-top-color: transparent; }
.r7 { margin-top: 33px; } .r8 { margin-top: 22px; }

/* Taskbar */
.taskbar { height: 60px; flex: none; border-top: 1px solid #a5b4b7; background: linear-gradient(90deg, #cde9eb 0, #c9ebed 400px, #dfe7e8 860px, #e0e7e7 1020px, #cbebed 1400px); display: flex; }
.start { margin: 15px 0 0 26px; }
.search { width: 274px; height: 39px; margin: 10px 0 0 18px; border-radius: 20px; background: #f0fafb; border: 1px solid #bcd5d9; border-bottom-color: #9fb9bd; display: flex; align-items: center; padding-left: 13px; font-size: 16.500px; color: #5a6163; }
.search > svg:first-child { fill: none; stroke: #222; stroke-width: 2.200; }
.search span { width: 51px; margin-left: 12px; }
.party { margin-left: 109px; }
.apps { display: flex; margin-left: 2px; }
.app { width: 55px; height: 59px; display: flex; justify-content: center; padding-top: 14px; position: relative; }
.app svg { position: relative; }
.current::before { content: ""; position: absolute; left: 4px; top: 5px; width: 48px; height: 48px; border-radius: 5px; background: #f2f4f4; }
.run::after, .current::after { content: ""; position: absolute; bottom: 6px; left: 24px; width: 8px; height: 4px; border-radius: 2px; background: #878c8d; }
.current::after { left: 18px; width: 20px; background: #268293; }
.pre { position: absolute; left: 20px; top: 35px; width: 22px; font-size: 8px; line-height: 11px; font-weight: 700; text-align: center; letter-spacing: .6px; color: #000; }
.temp { position: absolute; left: 23px; top: 8px; width: 30px; height: 20px; border-radius: 10px; background: #f1f8f9; font-size: 14px; line-height: 20px; text-align: center; color: #111; }
.count { position: absolute; left: 29px; top: 8px; width: 20px; height: 20px; border-radius: 50%; background: #26808f; color: #fff; font-size: 14px; line-height: 20px; text-align: center; }
.avatar { position: absolute; left: 29px; top: 8px; width: 20px; height: 20px; border-radius: 50%; background: radial-gradient(circle at 65% 72%, #311a15 0 14%, #8a7a6a 28%, #b5b1a3 55%, #82806f); }
.tray { margin-left: auto; display: flex; align-items: center; width: 364px; }
.tray svg { margin-top: -2px; }
.ti { fill: none; stroke: #1b1b1b; stroke-linecap: round; stroke-linejoin: round; }
.cloud { margin-left: 22px; }
.lang { width: 30px; margin-left: 22px; display: flex; flex-direction: column; align-items: center; font-size: 14.500px; line-height: 20px; color: #1b1b1b; }
.wifi { margin-left: 21px; } .vol { margin-left: 8px; } .bat { margin-left: 9px; }
.clock { width: 77px; margin-left: 19px; display: flex; flex-direction: column; align-items: flex-end; font-size: 14.500px; line-height: 20px; color: #1b1b1b; }
.lang, .clock { margin-top: -3px; }
.notif { margin-left: 10px; }
```
FILE: fit.js
```js
// Tracks each label out (or in) so that it fills its declared width in px.
document.querySelectorAll('[data-w]').forEach(function (el) {
  var range = document.createRange();
  range.selectNodeContents(el);
  var natural = range.getBoundingClientRect().width;
  var gaps = el.textContent.length - 1;
  var spacing = (parseFloat(el.dataset.w) - natural) / gaps;
  el.style.letterSpacing = spacing.toFixed(3) + 'px';
  el.style.marginRight = (-spacing).toFixed(3) + 'px';
});
```
